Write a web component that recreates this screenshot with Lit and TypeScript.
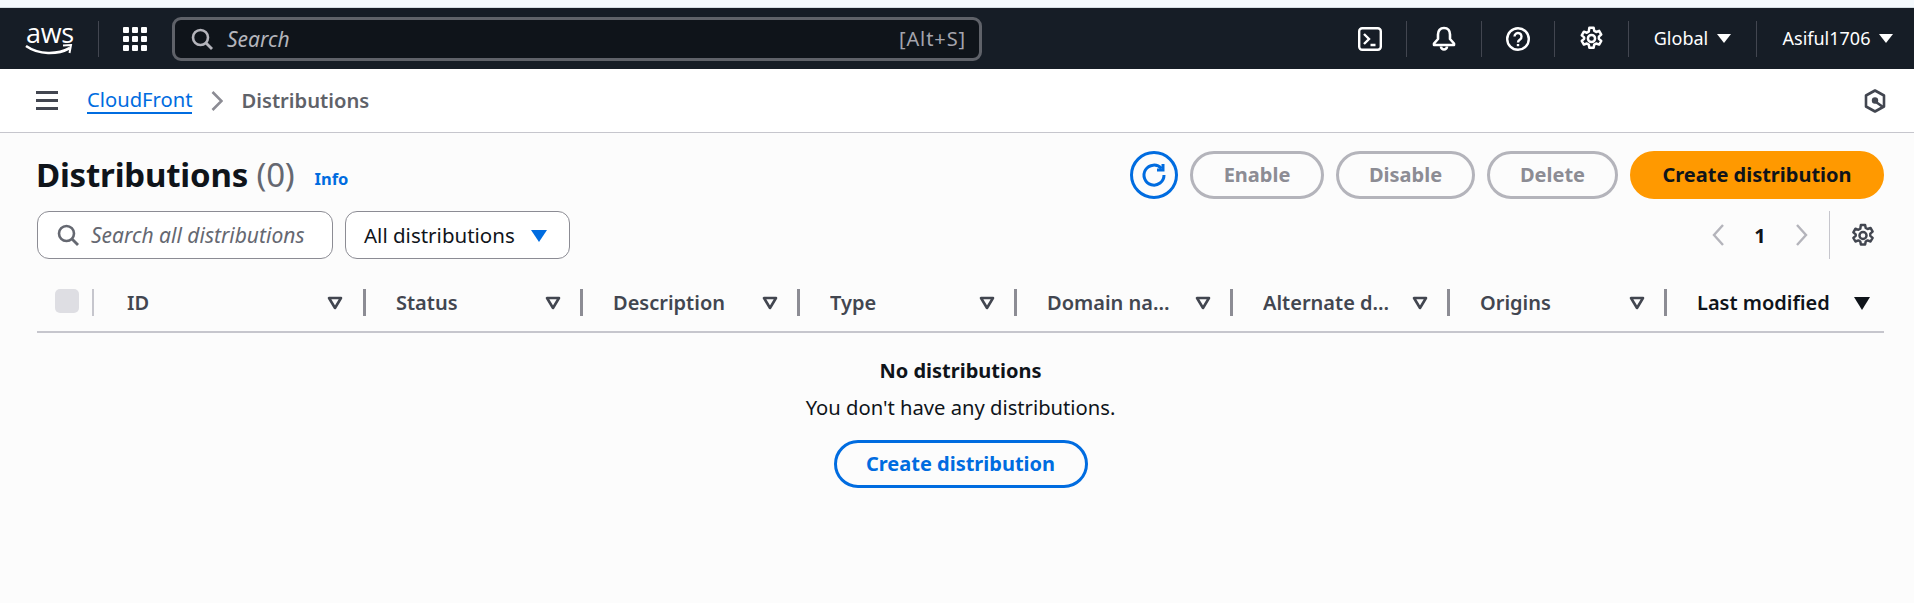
import { LitElement, html, css, svg } from "lit";
import { customElement } from "lit/decorators.js";

const gearPath = svg`<path d="M9.2 2h3.6l.5 2.6 1.6.9 2.5-.9 1.8 3.1-2 1.7v1.900l2 1.700-1.800 3.100-2.500-.9-1.600.9-.5 2.600H9.200l-.5-2.600-1.600-.9-2.500.9-1.800-3.100 2-1.700V10.050l-2-1.700 1.800-3.100 2.500.9 1.600-.9z" fill="none" stroke="currentColor" stroke-width="2.1" stroke-linejoin="round"/><circle cx="11" cy="11" r="3" fill="none" stroke="currentColor" stroke-width="2.1"/>`;

const searchIcon = html`<svg class="ico" width="24" height="24" viewBox="0 0 24 24"><circle cx="10.5" cy="10.5" r="7.5" fill="none" stroke="currentColor" stroke-width="2.6"/><path d="M16 16l6 6" stroke="currentColor" stroke-width="2.8" fill="none"/></svg>`;

const columns = [
  { label: "ID", w: 272 },
  { label: "Status", w: 217 },
  { label: "Description", w: 217 },
  { label: "Type", w: 217 },
  { label: "Domain name", w: 216 },
  { label: "Alternate domain names", w: 217 },
  { label: "Origins", w: 217 },
];

@customElement("app-root")
export class AppRoot extends LitElement {
  static styles = css`
    :host { display: block; height: 603px; overflow: hidden; background: #fcfcfc; font-family: "Noto Sans", "Open Sans", sans-serif; color: #0f141a; }
    * { box-sizing: border-box; }
    .strip { height: 8px; background: #f4f9fd; border-bottom: 1px solid #d5dde3; }
    .nav { height: 61px; background: #161d26; display: flex; align-items: center; color: #fff; position: relative; }
    .logo { width: 98px; height: 60px; padding-left: 25px; display: flex; flex-direction: column; align-items: flex-start; flex: none; }
    .logo-text { font-family: "Open Sans", sans-serif; font-size: 27px; line-height: 26px; height: 24px; margin-top: 11px; letter-spacing: -.3px; font-weight: 400; padding-left: 1px; }
    .navsep { width: 1px; height: 36px; background: #424650; flex: none; }
    .grid { width: 24px; height: 24px; margin-left: 24px; display: grid; grid-template-columns: repeat(3, 6px); grid-auto-rows: 6px; gap: 3px; flex: none; }
    .grid i { background: #fff; border-radius: 1px; display: block; }
    .navsearch { margin-left: 25px; width: 810px; height: 44px; border: 3px solid #5f6269; border-radius: 9px; background: #0f141a; display: flex; align-items: center; padding: 0 13px 0 15px; color: #b4b4bb; flex: none; }
    .navsearch .ph { font-style: italic; font-size: 21px; margin-left: 13px; flex: 1; }
    .navsearch .key { font-size: 20px; color: #a4a4ad; letter-spacing: .9px; }
    .navright { margin-left: auto; display: flex; align-items: center; height: 60px; }
    .navitem { display: flex; align-items: center; justify-content: center; height: 36px; border-left: 1px solid #424650; flex: none; }
    .navitem.first { border-left: 0; }
    .navtext { font-size: 18px; color: #fff; display: flex; align-items: center; gap: 9px; padding-bottom: 2px; }
    .navitem.user { padding-left: 5px; }
    .caret-w { width: 0; height: 0; border-left: 7px solid transparent; border-right: 7px solid transparent; border-top: 9px solid #fff; margin-top: 2px; }
    .crumbs { height: 64px; background: #fff; border-bottom: 1px solid #c6c6cd; display: flex; align-items: center; padding: 0 28px 0 36px; }
    .burger { width: 22px; height: 19px; display: flex; flex-direction: column; justify-content: space-between; flex: none; }
    .burger i { display: block; height: 3px; background: #424650; }
    .link { margin-left: 29px; margin-bottom: 1px; font-size: 20.2px; color: #006ce0; border-bottom: 2px solid #006ce0; line-height: 26px; }
    .chev { margin: 0 18px 0 19px; color: #8c8c94; display: flex; }
    .cur { font-size: 20.2px; font-weight: 600; color: #5f6269; margin-bottom: 2px; }
    .hex { margin-left: auto; color: #424650; display: flex; }
    .main { padding: 18px 30px 0 37px; }
    .row1 { display: flex; align-items: center; height: 48px; }
    h1 { margin: 0 0 0 -1px; font-size: 33px; font-weight: 700; line-height: 48px; letter-spacing: -.2px; color: #0f141a; }
    h1 span { font-weight: 400; color: #656871; }
    .info { font-size: 16.5px; font-weight: 700; color: #006ce0; margin-left: 20px; margin-top: 6px; }
    .actions { margin-left: auto; display: flex; gap: 12px; align-items: center; }
    .btn { height: 48px; border-radius: 24px; border: 3px solid #b4b4bb; background: transparent; font: 700 20px "Noto Sans", sans-serif; color: #8c8c94; display: flex; align-items: center; justify-content: center; flex: none; padding-bottom: 1px; }
    .refresh { width: 48px; border-color: #006ce0; color: #006ce0; padding: 0; }
    .primary { background: #ff9900; border-color: #ff9900; color: #0f141a; }
    .row2 { display: flex; align-items: center; margin-top: 12px; height: 48px; }
    .filter { width: 296px; height: 48px; border: 1px solid #8c8c94; border-radius: 12px; background: #fff; display: flex; align-items: center; padding: 0 8px 1px 18px; color: #656871; }
    .filter .ph { font-style: italic; font-size: 21px; margin-left: 11px; white-space: nowrap; }
    .select { width: 225px; margin-left: 12px; height: 48px; border: 1px solid #8c8c94; border-radius: 12px; background: #fff; display: flex; align-items: center; padding: 0 18px 1px; font-size: 20.5px; gap: 16px; white-space: nowrap; }
    .caret-b { width: 0; height: 0; border-left: 8px solid transparent; border-right: 8px solid transparent; border-top: 12px solid #006ce0; margin-top: 2px; }
    .pager { margin-left: auto; display: flex; align-items: center; color: #b4b4bb; }
    .pg1 { font-size: 20px; font-weight: 700; color: #0f141a; width: 20px; text-align: center; margin: 0 25px 0 25px; }
    .pagersep { width: 1px; height: 48px; background: #c6c6cd; margin: 0 21px 0 20px; }
    .pagergear { color: #424650; display: flex; margin-right: 9px; }
    .thead { display: flex; margin-top: 30px; height: 44px; border-bottom: 2px solid #c6c6cd; }
    .chk { width: 57px; padding-left: 18px; display: flex; flex: none; position: relative; }
    .chkbox { width: 24px; height: 24px; background: #dedee3; border-radius: 5px; }
    .sepl { position: absolute; right: 0; top: 0; width: 2px; height: 27px; background: #c6c6cd; }
    .th { display: flex; height: 27px; align-items: center; padding-left: 30px; padding-right: 19px; border-right: 3px solid #8c8c94; font-size: 20px; font-weight: 600; color: #424650; flex: none; justify-content: space-between; }
    .chk + .th { padding-left: 33px; padding-right: 20px; }
    .th .lbl { white-space: nowrap; overflow: hidden; text-overflow: ellipsis; }
    .th svg { flex: none; margin-left: 16px; }
    .th.last { border-right: 0; color: #0f141a; flex: 1; padding-right: 14px; padding-left: 30px; }
    .empty { display: flex; flex-direction: column; align-items: center; padding-top: 24px; }
    .empty b { font-size: 20px; line-height: 28px; font-weight: 700; }
    .empty p { font-size: 20.2px; line-height: 28px; margin: 8px 0 0; }
    .create2 { margin-top: 19px; width: 254px; border-color: #006ce0; color: #006ce0; }
  `;

  render() {
    return html`
      <div class="strip"></div>
      <div class="nav">
        <div class="logo">
          <span class="logo-text">aws</span>
          <svg width="48" height="12" viewBox="0 0 48 12" fill="none" stroke="#fff"><path d="M1 2c13 9 31 9 44 2" stroke-width="2.6"/><path d="M38 1.5l8-.5-1.5 8" stroke-width="2"/></svg>
        </div>
        <div class="navsep"></div>
        <div class="grid">${Array.from({ length: 9 }, () => html`<i></i>`)}</div>
        <div class="navsearch">${searchIcon}<span class="ph">Search</span><span class="key">[Alt+S]</span></div>
        <div class="navright">
          <div class="navitem first" style="width:72px">
            <svg width="24" height="24" viewBox="0 0 24 24" fill="none" stroke="#fff" stroke-width="2.4"><rect x="1.2" y="1.2" width="21.6" height="21.6" rx="3"/><path d="M6 7l5 5-5 5M12.500 18h5"/></svg>
          </div>
          <div class="navitem" style="width:75px">
            <svg width="24" height="26" viewBox="0 0 24 26" fill="none" stroke="#fff" stroke-width="2.6"><path d="M12 2c-4 0-6 3-6 6.500V13l-4 4.500v1.500h20v-1.500L18 13V8.500C18 5 16 2 12 2z" stroke-linejoin="round"/><path d="M9 20.500a3 3 0 0 0 6 0"/></svg>
          </div>
          <div class="navitem" style="width:73px">
            <svg width="24" height="24" viewBox="0 0 24 24" fill="none" stroke="#fff" stroke-width="2.400"><circle cx="12" cy="12" r="10.800"/><path d="M8.500 9.500a3.500 3.500 0 1 1 5.500 2.900c-1.400.9-2 1.500-2 3.100"/><path d="M12 17v2.200"/></svg>
          </div>
          <div class="navitem" style="width:74px">
            <svg width="25" height="25" viewBox="0.8 0.5 20.400 21" style="color:#fff">${gearPath}</svg>
          </div>
          <div class="navitem" style="width:128px"><span class="navtext">Global <span class="caret-w"></span></span></div>
          <div class="navitem user" style="width:158px"><span class="navtext">Asiful1706 <span class="caret-w"></span></span></div>
        </div>
      </div>
      <div class="crumbs">
        <div class="burger"><i></i><i></i><i></i></div>
        <span class="link">CloudFront</span>
        <span class="chev"><svg width="12" height="20" viewBox="0 0 12 20" fill="none" stroke="currentColor" stroke-width="2.6"><path d="M1.500 1l9 9-9 9"/></svg></span>
        <span class="cur">Distributions</span>
        <span class="hex"><svg width="22" height="24" viewBox="0 0 22 24" fill="none" stroke="currentColor" stroke-width="2.6"><path d="M11 1.500l9 5v11l-9 5-9-5v-11z" stroke-linejoin="round"/><circle cx="11" cy="11.500" r="3.200" fill="currentColor" stroke="none"/><path d="M12 13l7 5" /></svg></span>
      </div>
      <div class="main">
        <div class="row1">
          <h1>Distributions <span>(0)</span></h1>
          <span class="info">Info</span>
          <div class="actions">
            <div class="btn refresh">
              <svg width="26" height="26" viewBox="0 0 26 26" fill="none" stroke="currentColor" stroke-width="3"><path d="M20.500 6.500A10 10 0 1 0 23 13"/><path d="M22 2v6h-6"/></svg>
            </div>
            <div class="btn" style="width:134px">Enable</div>
            <div class="btn" style="width:139px">Disable</div>
            <div class="btn" style="width:131px">Delete</div>
            <div class="btn primary" style="width:254px">Create distribution</div>
          </div>
        </div>
        <div class="row2">
          <div class="filter">${searchIcon}<span class="ph">Search all distributions</span></div>
          <div class="select">All distributions <span class="caret-b"></span></div>
          <div class="pager">
            <svg width="14" height="24" viewBox="0 0 14 24" fill="none" stroke="currentColor" stroke-width="2.400"><path d="M12 2L3 12l9 10"/></svg>
            <span class="pg1">1</span>
            <svg width="14" height="24" viewBox="0 0 14 24" fill="none" stroke="currentColor" stroke-width="2.400"><path d="M2 2l9 10-9 10"/></svg>
            <span class="pagersep"></span>
            <span class="pagergear"><svg width="24" height="25" viewBox="0.8 0.5 20.400 21">${gearPath}</svg></span>
          </div>
        </div>
        <div class="thead">
          <div class="chk"><div class="chkbox"></div><span class="sepl"></span></div>
          ${columns.map(
            (c) => html`<div class="th" style="width:${c.w}px">
              <span class="lbl">${c.label}</span>
              <svg width="16" height="14" viewBox="0 0 16 14" fill="none" stroke="currentColor" stroke-width="2.600"><path d="M2 2h12L8 12z" stroke-linejoin="round"/></svg>
            </div>`
          )}
          <div class="th last">
            <span class="lbl">Last modified</span>
            <svg width="16" height="14" viewBox="0 0 16 14" fill="currentColor"><path d="M0 1h16L8 14z"/></svg>
          </div>
        </div>
        <div class="empty">
          <b>No distributions</b>
          <p>You don't have any distributions.</p>
          <div class="btn create2">Create distribution</div>
        </div>
      </div>
    `;
  }
}
